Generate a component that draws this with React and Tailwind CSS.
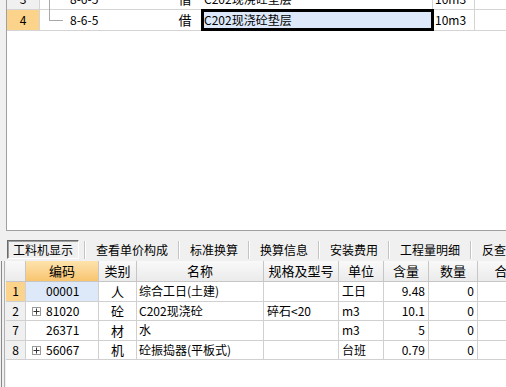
import React from 'react';

const font = { fontFamily: '"Noto Sans CJK SC", "Liberation Sans", sans-serif' };

const tabs = ['工料机显示', '查看单价构成', '标准换算', '换算信息', '安装费用', '工程量明细', '反查图形工程量'];

const columns = [
  { key: 'no', label: '', w: 'w-[20px]' },
  { key: 'code', label: '编码', w: 'w-[73px]' },
  { key: 'type', label: '类别', w: 'w-[38px]' },
  { key: 'name', label: '名称', w: 'w-[127px]' },
  { key: 'spec', label: '规格及型号', w: 'w-[75px]' },
  { key: 'unit', label: '单位', w: 'w-[45px]' },
  { key: 'qty', label: '含量', w: 'w-[45px]' },
  { key: 'amount', label: '数量', w: 'w-[49px]' },
  { key: 'total', label: '合价', w: 'w-[60px]' },
];

const rows = [
  { no: '1', code: '00001', type: '人', name: '综合工日(土建)', spec: '', unit: '工日', qty: '9.48', amount: '0', active: true },
  { no: '2', code: '81020', type: '砼', name: 'C202现浇砼', spec: '碎石<20', unit: 'm3', qty: '10.1', amount: '0', plus: true },
  { no: '7', code: '26371', type: '材', name: '水', spec: '', unit: 'm3', qty: '5', amount: '0' },
  { no: '8', code: '56067', type: '机', name: '砼振捣器(平板式)', spec: '', unit: '台班', qty: '0.79', amount: '0', plus: true },
];

const PlusBox = () => (
  <span className="absolute left-[6px] top-[5px] w-[9px] h-[9px] border border-[#9a9a9a] bg-white flex items-center justify-center">
    <svg width="7" height="7" viewBox="0 0 7 7">
      <path d="M0.5 3.5h6M3.5 0.5v6" stroke="#333" strokeWidth="1" />
    </svg>
  </span>
);

const TopRow = ({ no, active, first }) => (
  <div className="flex h-[21px] border-b border-[#d4d4d4] text-[12px] text-black">
    <div className={`w-[33px] shrink-0 flex items-center justify-center border-r border-[#d4d4d4] ${active ? 'bg-[#fcd38b]' : 'bg-[#f0f0f0]'}`}>
      {no}
    </div>
    <div className="w-[128px] shrink-0 relative flex items-center pl-[30px]">
      <span className={`absolute left-[9px] w-px bg-[#a8a8a8] ${first ? 'top-0 h-[11px]' : 'top-[-11px] h-[21px]'}`} />
      <span className="absolute left-[9px] top-[10px] w-[14px] h-px bg-[#a8a8a8]" />
      8-6-5
    </div>
    <div className="w-[34px] shrink-0 flex items-center justify-center text-[13px]">借</div>
    <div className={`w-[231px] shrink-0 flex items-center pl-[2px] ${active ? 'bg-[#dde9fa] outline outline-[3px] outline-black -outline-offset-[2px] relative z-10' : 'border-r border-[#d4d4d4]'}`}>
      C202现浇砼垫层
    </div>
    <div className="w-[42px] shrink-0 flex items-center pl-[2px] border-r border-[#d4d4d4]">10m3</div>
    <div className="flex-1" />
  </div>
);

export default function App() {
  return (
    <div className="w-[506px] h-[387px] overflow-hidden bg-[#f0f0f0] flex flex-col" style={font}>
      {/* top grid */}
      <div className="h-[231px] ml-[6px] bg-white border-l border-b border-[#a0a0a0] overflow-hidden">
        <div className="mt-[-11px]">
          <TopRow no="3" first />
          <TopRow no="4" active />
        </div>
      </div>

      {/* tabs */}
      <div className="h-[30px] flex items-end pl-[7px] pb-[2px] text-[12px] text-black whitespace-nowrap">
        {tabs.map((t, i) => (
          <div key={t} className="flex items-center h-[19px]">
            {i === 0 ? (
              <div className="h-[19px] px-[5px] flex items-center border border-t-[#6a6a6a] border-l-[#6a6a6a] border-b-white border-r-white bg-[#f0f0f0] shadow-[inset_1px_1px_0_#a0a0a0]">
                {t}
              </div>
            ) : (
              <div className="px-[10px] flex items-center">{t}</div>
            )}
            <span className={`h-[18px] w-[2px] border-l border-[#c4c4c4] border-r border-r-white ${i === 0 ? 'ml-[5px]' : ''}`} />
          </div>
        ))}
      </div>

      {/* bottom grid */}
      <div className="flex-1 flex">
        <div className="w-[6px] shrink-0 flex">
          <span className="ml-[1px] w-px bg-[#8a8a8a]" />
          <span className="ml-[2px] w-px bg-[#b0b0b0]" />
        </div>
        <div className="flex-1 bg-white text-[12px] text-black overflow-hidden">
          <div className="flex h-[21px] border-b border-[#c6c6c6] whitespace-nowrap">
            {columns.map((c) => (
              <div
                key={c.key}
                className={`${c.w} shrink-0 flex items-center justify-center border-r border-[#c6c6c6] text-[13px] ${
                  c.key === 'code'
                    ? 'bg-gradient-to-b from-[#fde3ad] to-[#f8c56f]'
                    : 'bg-gradient-to-b from-[#f9f9f9] to-[#ebebeb]'
                }`}
              >
                {c.label}
              </div>
            ))}
          </div>
          {rows.map((r) => (
            <div key={r.no} className="flex h-[19.5px] border-b border-[#d0d0d0] whitespace-nowrap">
              <div className={`w-[20px] shrink-0 flex items-center justify-center border-r border-[#d0d0d0] ${r.active ? 'bg-[#fcd38b]' : 'bg-[#f0f0f0]'}`}>
                {r.no}
              </div>
              <div className={`w-[73px] shrink-0 relative flex items-center pl-[20px] border-r border-[#d0d0d0] ${r.active ? 'bg-[#dde9f8]' : ''}`}>
                {r.plus && <PlusBox />}
                {r.code}
              </div>
              <div className="w-[38px] shrink-0 flex items-center justify-center border-r border-[#d0d0d0] text-[13px]">{r.type}</div>
              <div className="w-[127px] shrink-0 flex items-center pl-[2px] border-r border-[#d0d0d0]">{r.name}</div>
              <div className="w-[75px] shrink-0 flex items-center pl-[3px] border-r border-[#d0d0d0]">{r.spec}</div>
              <div className="w-[45px] shrink-0 flex items-center pl-[3px] border-r border-[#d0d0d0]">{r.unit}</div>
              <div className="w-[45px] shrink-0 flex items-center justify-end pr-[3px] border-r border-[#d0d0d0]">{r.qty}</div>
              <div className="w-[49px] shrink-0 flex items-center justify-end pr-[3px] border-r border-[#d0d0d0]">{r.amount}</div>
              <div className="w-[60px] shrink-0 border-r border-[#d0d0d0]" />
            </div>
          ))}
        </div>
      </div>
    </div>
  );
}
